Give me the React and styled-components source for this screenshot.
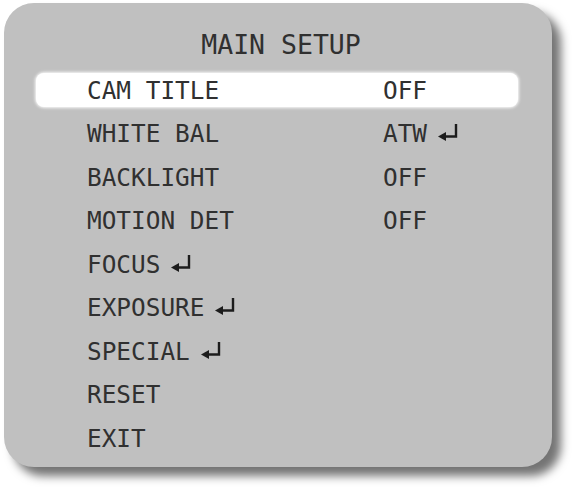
import React from 'react';
import styled, { createGlobalStyle } from 'styled-components';

const GlobalStyle = createGlobalStyle`
    body {
        margin: 0;
        background: #ffffff;
    }
`

const items = [
    { label: "CAM TITLE", value: "OFF", active: true },
    { label: "WHITE BAL", value: "ATW", valueArrow: true },
    { label: "BACKLIGHT", value: "OFF" },
    { label: "MOTION DET", value: "OFF" },
    { label: "FOCUS", arrow: true },
    { label: "EXPOSURE", arrow: true },
    { label: "SPECIAL", arrow: true },
    { label: "RESET" },
    { label: "EXIT" },
]

const EnterIcon = () => (
    <ArrowBox width="20" height="18" viewBox="0 0 20 18">
        <path d="M18 1 V13.5 H7" fill="none" stroke="#1c1c1c" strokeWidth="2.4" />
        <path d="M0 13.5 L8 9 L8 18 Z" fill="#1c1c1c" />
    </ArrowBox>
)

export default function App() {
    return (
        <>
            <GlobalStyle />
            <Page>
                <Panel>
                    <Title>MAIN SETUP</Title>
                    <Menu>
                        {items.map((item) => (
                            <Row key={item.label} active={item.active}>
                                <Label>
                                    {item.label}
                                    {item.arrow && <EnterIcon />}
                                </Label>
                                {item.value && (
                                    <Value>
                                        {item.value}
                                        {item.valueArrow && <EnterIcon />}
                                    </Value>
                                )}
                            </Row>
                        ))}
                    </Menu>
                </Panel>
            </Page>
        </>
    )
}

const Page = styled.div`
    padding: 3px 0 0 4px;
    width: 575px;
    height: 491px;
    box-sizing: border-box;
`

const Panel = styled.div`
    width: 548px;
    height: 464px;
    box-sizing: border-box;
    padding-top: 22px;
    background: #c0c0c0;
    border-radius: 30px;
    box-shadow: 9px 9px 10px rgba(0, 0, 0, 0.55);
    font-family: "DejaVu Sans Mono", "Liberation Mono", monospace;
    color: #303030;
`

const Title = styled.div`
    height: 40px;
    line-height: 40px;
    font-size: 26.5px;
    text-align: center;
    padding-left: 6px;
`

const Menu = styled.div`
    margin-top: 8px;
    display: flex;
    flex-direction: column;
    gap: 9.5px;
`

const Row = styled.div`
    display: flex;
    align-items: center;
    height: 34px;
    margin-left: 32px;
    width: 482px;
    padding-left: 51px;
    box-sizing: border-box;
    font-size: 24.4px;
    border-radius: 8px;
    background: ${(p) => (p.active ? "#ffffff" : "transparent")};
    box-shadow: ${(p) => (p.active ? "0 0 3px 1px rgba(255,255,255,0.9)" : "none")};
`

const Label = styled.div`
    display: flex;
    align-items: center;
    width: 296px;
    white-space: pre;
`

const Value = styled.div`
    display: flex;
    align-items: center;
    white-space: pre;
`

const ArrowBox = styled.svg`
    margin-left: 11px;
    margin-top: -3px;
`
